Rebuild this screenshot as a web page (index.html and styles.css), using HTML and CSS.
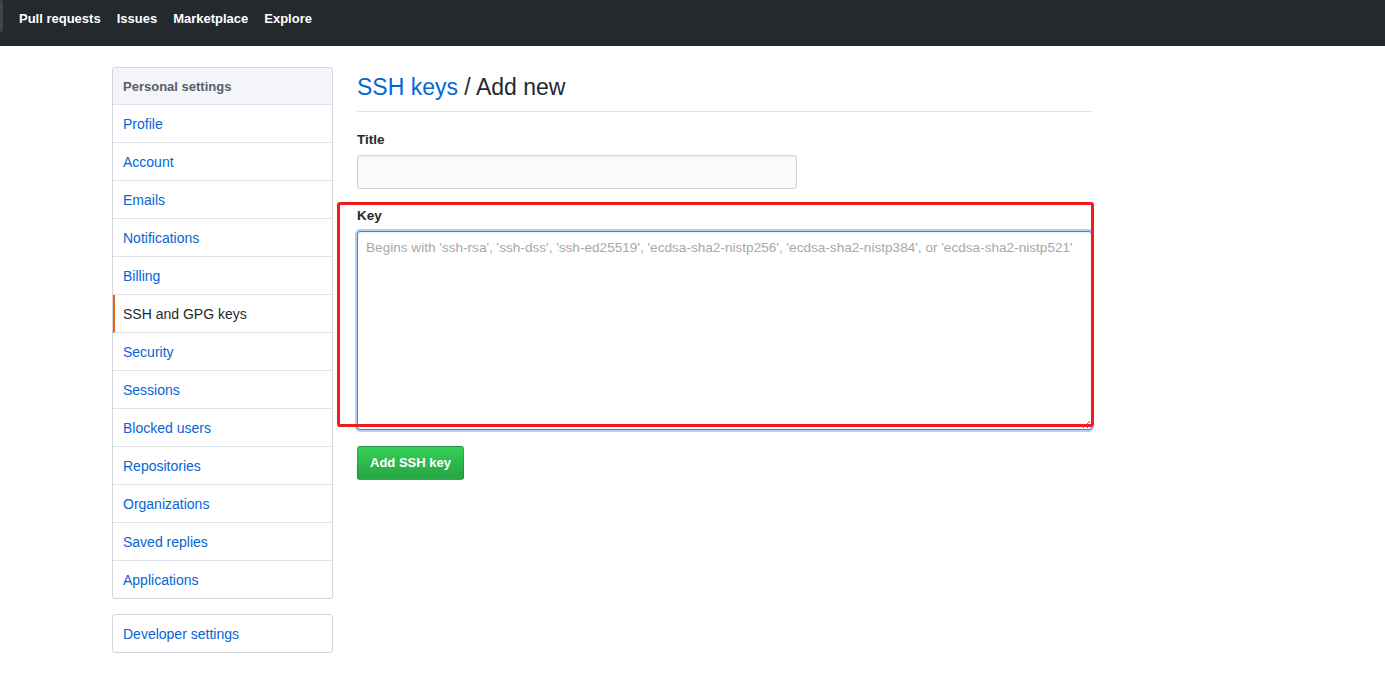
FILE: index.html
```html
<!DOCTYPE html>
<html lang="en">
<head>
    <meta charset="UTF-8">
    <meta name="viewport" content="width=device-width, initial-scale=1.0">
    <title>Add new SSH key</title>
    <link rel="stylesheet" href="styles.css">
</head>
<body>

    <!-- Top Bar -->
    <div class="top-bar">
        <div class="search-stub"></div>
        <nav class="top-nav">
            <a href="#">Pull requests</a>
            <a href="#">Issues</a>
            <a href="#">Marketplace</a>
            <a href="#">Explore</a>
        </nav>
    </div>

    <!-- Main Content -->
    <div class="container">
        <div class="sidebar">
            <nav class="menu">
                <div class="menu-heading">Personal settings</div>
                <a class="menu-item" href="#">Profile</a>
                <a class="menu-item" href="#">Account</a>
                <a class="menu-item" href="#">Emails</a>
                <a class="menu-item" href="#">Notifications</a>
                <a class="menu-item" href="#">Billing</a>
                <a class="menu-item selected" href="#">SSH and GPG keys</a>
                <a class="menu-item" href="#">Security</a>
                <a class="menu-item" href="#">Sessions</a>
                <a class="menu-item" href="#">Blocked users</a>
                <a class="menu-item" href="#">Repositories</a>
                <a class="menu-item" href="#">Organizations</a>
                <a class="menu-item" href="#">Saved replies</a>
                <a class="menu-item" href="#">Applications</a>
            </nav>
            <nav class="menu">
                <a class="menu-item" href="#">Developer settings</a>
            </nav>
        </div>

        <div class="main">
            <div class="subhead">
                <h2><a href="#">SSH keys</a> / Add new</h2>
            </div>
            <form>
                <div class="form-group">
                    <label for="key-title">Title</label>
                    <input type="text" id="key-title" class="form-control title-input">
                </div>
                <div class="form-group key-group">
                    <label for="key-body">Key</label>
                    <textarea id="key-body" class="form-control key-input" placeholder="Begins with 'ssh-rsa', 'ssh-dss', 'ssh-ed25519', 'ecdsa-sha2-nistp256', 'ecdsa-sha2-nistp384', or 'ecdsa-sha2-nistp521'"></textarea>
                    <!-- annotation box drawn over the key field -->
                    <div class="highlight"></div>
                </div>
                <button type="button" class="btn-primary">Add SSH key</button>
            </form>
        </div>
    </div>

</body>
</html>
```

FILE: styles.css
```css
* {
    margin: 0;
    padding: 0;
    box-sizing: border-box;
    font-family: "Liberation Sans", Arial, sans-serif;
}

body {
    background-color: #ffffff;
    color: #24292e;
    font-size: 14px;
    line-height: 1.5;
}

a {
    text-decoration: none;
    color: #0366d6;
}

/* Top Bar */
.top-bar {
    display: flex;
    align-items: flex-start;
    height: 46px;
    background-color: #24292e;
}

.search-stub {
    width: 3px;
    height: 32px;
    background-color: #3f4448;
    border-radius: 0 3px 3px 0;
}

.top-nav {
    display: flex;
    gap: 16px;
    padding: 8px 0 0 16px;
}

.top-nav a {
    color: #ffffff;
    font-weight: bold;
    font-size: 13px;
    line-height: 21px;
}

/* Layout */
.container {
    display: flex;
    gap: 24px;
    width: 980px;
    margin-left: 112px;
    padding-top: 21px;
}

.sidebar {
    width: 221px;
    flex-shrink: 0;
}

.menu {
    border: 1px solid #d1d5da;
    border-radius: 3px;
    margin-bottom: 15px;
    overflow: hidden;
}

.menu-heading {
    padding: 8px 10px 7px;
    font-size: 13px;
    line-height: 21px;
    font-weight: bold;
    color: #586069;
    background-color: #f3f5f8;
    border-bottom: 1px solid #e1e4e8;
}

.menu-item {
    display: block;
    padding: 9px 10px 7px;
    line-height: 21px;
    border-bottom: 1px solid #e1e4e8;
}

.menu-item:last-child {
    border-bottom: none;
}

.menu-item.selected {
    color: #24292e;
    border-left: 2px solid #e36209;
    padding-left: 8px;
}

/* Main */
.main {
    flex: 1;
}

.subhead {
    border-bottom: 1px solid #e1e4e8;
    padding-bottom: 6px;
    margin-top: 2px;
    margin-bottom: 17px;
}

.subhead h2 {
    font-size: 23px;
    font-weight: normal;
    line-height: 36px;
}

.form-group {
    margin-bottom: 16px;
}

.form-group label {
    display: block;
    font-weight: bold;
    font-size: 13.5px;
    line-height: 21px;
    margin-bottom: 5px;
}

.form-control {
    display: block;
    font-size: 14px;
    line-height: 20px;
    padding: 6px 8px;
    color: #24292e;
    background-color: #fafbfc;
    border: 1px solid #d1d5da;
    border-radius: 3px;
    box-shadow: inset 0 1px 2px rgba(27, 31, 35, 0.075);
}

.title-input {
    width: 440px;
    height: 34px;
}

.key-input {
    width: 100%;
    height: 199px;
    background-color: #ffffff;
    border-color: #2188ff;
    box-shadow: inset 0 1px 2px rgba(27, 31, 35, 0.075), 0 0 0 2px rgba(3, 102, 214, 0.3);
    outline: none;
    resize: vertical;
}

.key-input::placeholder {
    color: #a8a8a8;
    font-size: 13.6px;
}

.key-group {
    position: relative;
}

.highlight {
    position: absolute;
    left: -20px;
    top: -3px;
    width: 757px;
    height: 225px;
    border: 3px solid #f51b1b;
    border-radius: 3px;
    pointer-events: none;
}

.btn-primary {
    padding: 6px 12px;
    font-size: 13px;
    font-weight: bold;
    line-height: 20px;
    color: #ffffff;
    background-image: linear-gradient(-180deg, #34d058 0%, #28a745 90%);
    border: 1px solid rgba(27, 31, 35, 0.2);
    border-radius: 3px;
    cursor: pointer;
}
```
